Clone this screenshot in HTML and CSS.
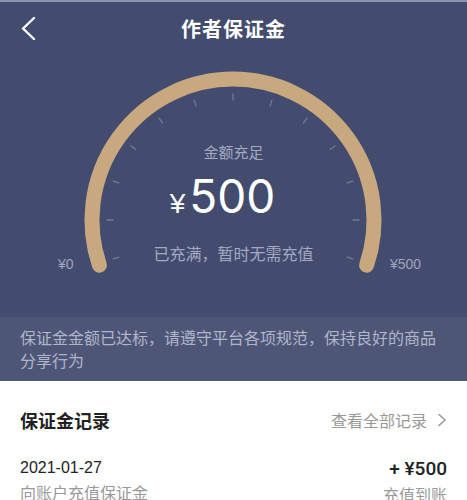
FILE: index.html
```html
<!DOCTYPE html>
<html lang="zh">
<head>
<meta charset="utf-8">
<link rel="stylesheet" href="styles.css">
</head>
<body>
<div class="top">
  <div class="status"></div>
  <div class="header">
    <svg class="back" width="16" height="24" viewBox="0 0 16 24"><polyline points="13,1 2,11.5 13,22" fill="none" stroke="#fff" stroke-width="2.4" stroke-linecap="round" stroke-linejoin="round"/></svg>
    <div class="title">作者保证金</div>
  </div>
  <div class="gauge">
    <svg class="dial" width="467" height="261" viewBox="0 56 467 261">
      <path d="M99.4 265.2 A141 141 0 1 1 366.6 265.2" fill="none" stroke="#c8a97f" stroke-width="15" stroke-linecap="round"/>
      <g stroke="#737a99" stroke-width="1.3" stroke-linecap="round">
        <line x1="233" y1="94" x2="233" y2="100" transform="rotate(-108 233 220)"/>
        <line x1="233" y1="94" x2="233" y2="100" transform="rotate(-90 233 220)"/>
        <line x1="233" y1="94" x2="233" y2="100" transform="rotate(-72 233 220)"/>
        <line x1="233" y1="94" x2="233" y2="100" transform="rotate(-54 233 220)"/>
        <line x1="233" y1="94" x2="233" y2="100" transform="rotate(-36 233 220)"/>
        <line x1="233" y1="94" x2="233" y2="100" transform="rotate(-18 233 220)"/>
        <line x1="233" y1="94" x2="233" y2="100"/>
        <line x1="233" y1="94" x2="233" y2="100" transform="rotate(18 233 220)"/>
        <line x1="233" y1="94" x2="233" y2="100" transform="rotate(36 233 220)"/>
        <line x1="233" y1="94" x2="233" y2="100" transform="rotate(54 233 220)"/>
        <line x1="233" y1="94" x2="233" y2="100" transform="rotate(72 233 220)"/>
        <line x1="233" y1="94" x2="233" y2="100" transform="rotate(90 233 220)"/>
        <line x1="233" y1="94" x2="233" y2="100" transform="rotate(108 233 220)"/>
      </g>
      <text class="scale" x="58" y="269">¥0</text>
      <text class="scale" x="390" y="269">¥500</text>
    </svg>
    <div class="center">
      <div class="state">金额充足</div>
      <div class="amount"><span class="yen">¥</span><span class="num">500</span></div>
      <div class="sub">已充满，暂时无需充值</div>
    </div>
  </div>
</div>
<div class="notice">保证金金额已达标，请遵守平台各项规范，保持良好的商品分享行为</div>
<div class="records">
  <div class="rec-head">
    <div class="rec-title">保证金记录</div>
    <div class="rec-more">查看全部记录<svg width="10" height="14" viewBox="0 0 10 14"><polyline points="2,1.5 8,7 2,12.5" fill="none" stroke="#9a9a9a" stroke-width="1.6" stroke-linecap="round" stroke-linejoin="round"/></svg></div>
  </div>
  <div class="rec-row">
    <div class="rec-left">
      <div class="rec-date">2021-01-27</div>
      <div class="rec-desc">向账户充值保证金</div>
    </div>
    <div class="rec-right">
      <div class="rec-amt">+ ¥500</div>
      <div class="rec-desc">充值到账</div>
    </div>
  </div>
</div>
</body>
</html>
```
FILE: styles.css
```css
html, body {
  margin: 0;
  padding: 0;
}
body {
  width: 467px;
  height: 500px;
  overflow: hidden;
  background: #fff;
  font-family: "Noto Sans CJK SC", "Noto Sans", sans-serif;
}
.top {
  background: #434c6e;
}
.status {
  height: 2px;
  background: #8d94b2;
}
.header {
  height: 54px;
  display: flex;
  align-items: center;
  justify-content: center;
  position: relative;
}
.back {
  position: absolute;
  left: 21px;
  top: 15px;
}
.title {
  color: #fff;
  font-size: 20px;
  font-weight: 700;
  letter-spacing: 1px;
  line-height: 28px;
}
.gauge {
  display: grid;
  height: 261px;
}
.gauge > * {
  grid-area: 1 / 1;
}
.dial {
  display: block;
}
.scale {
  font-family: "Liberation Sans", "Noto Sans CJK SC", sans-serif;
  font-size: 14px;
  fill: #9ea4bd;
}
.center {
  display: flex;
  flex-direction: column;
  align-items: center;
  padding-top: 86px;
}
.state {
  color: #a3a9c2;
  font-size: 15px;
  line-height: 20px;
}
.amount {
  display: flex;
  align-items: baseline;
  color: #fff;
  height: 64px;
  line-height: 64px;
  margin-top: 2px;
  margin-right: 22px;
}
.yen {
  font-family: "Liberation Sans", sans-serif;
  font-size: 28px;
  margin-right: 4px;
}
.num {
  font-family: "Inter", "Liberation Sans", sans-serif;
  font-size: 46px;
  letter-spacing: 0;
}
.sub {
  color: #a3a9c2;
  font-size: 16px;
  line-height: 22px;
  margin-top: 14px;
}
.notice {
  background: #4e5678;
  color: #b0b5ca;
  font-size: 16px;
  line-height: 23px;
  padding: 9px 20px 9px 20px;
}
.records {
  padding: 26px 20px 0 20px;
}
.rec-head {
  display: flex;
  justify-content: space-between;
  align-items: center;
  height: 26px;
}
.rec-title {
  font-size: 18px;
  font-weight: 700;
  color: #222;
}
.rec-more {
  display: flex;
  align-items: center;
  gap: 10px;
  font-size: 16px;
  color: #999;
}
.rec-row {
  display: flex;
  justify-content: space-between;
  margin-top: 24px;
}
.rec-left, .rec-right {
  display: flex;
  flex-direction: column;
}
.rec-right {
  align-items: flex-end;
}
.rec-date {
  font-family: "Liberation Sans", sans-serif;
  font-size: 16px;
  line-height: 22px;
  color: #222;
}
.rec-amt {
  font-family: "Roboto", "Liberation Sans", sans-serif;
  font-size: 19px;
  font-weight: 500;
  line-height: 24px;
  color: #222;
}
.rec-desc {
  font-size: 16px;
  line-height: 22px;
  color: #999;
  margin-top: 2px;
}
```
